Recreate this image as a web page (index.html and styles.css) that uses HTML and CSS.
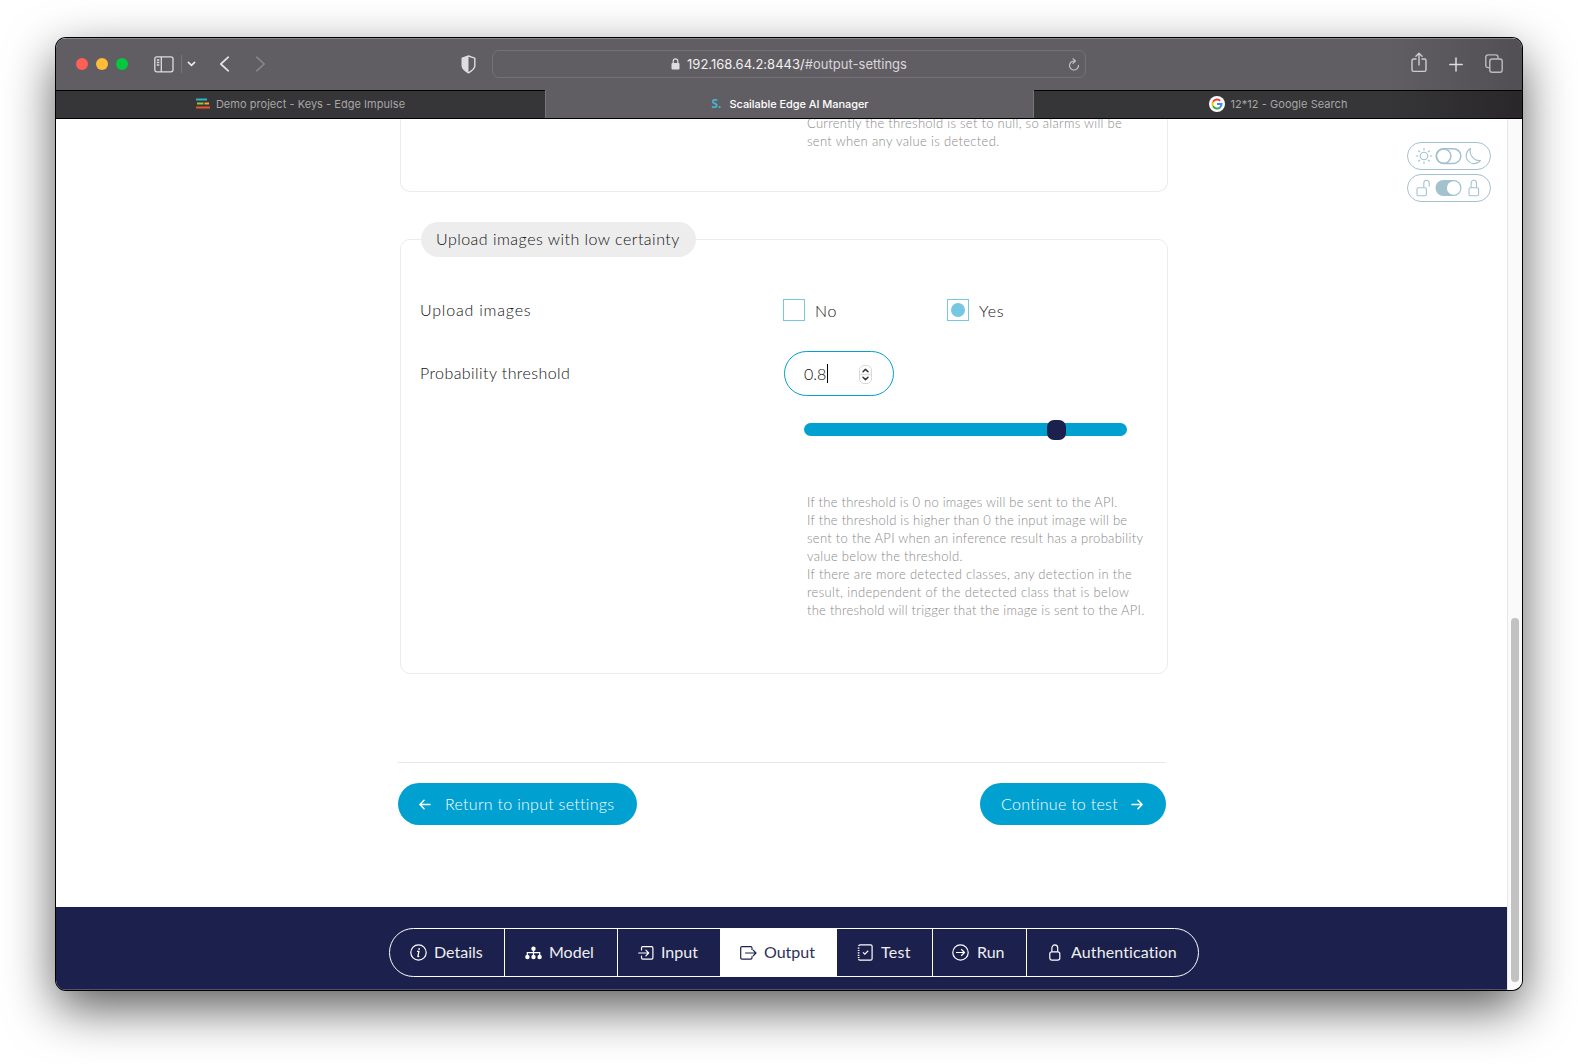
FILE: index.html
```html
<!DOCTYPE html>
<html lang="en">
<head>
<meta charset="utf-8">
<title>Scailable Edge AI Manager</title>
<link rel="stylesheet" href="styles.css">
</head>
<body>
<div class="window">
  <header class="toolbar">
    <div class="lights"><i class="red"></i><i class="yellow"></i><i class="green"></i></div>
    <svg class="sidebar-icon" width="20" height="17" viewBox="0 0 20 17" fill="none" stroke="#dedce1" stroke-width="1.3"><rect x=".8" y=".8" width="18.2" height="15" rx="2"/><path d="M7.3 1v15M2.8 4h2.5M2.8 6.5h2.5M2.8 9h2.5"/></svg>
    <span class="tool-divider"></span>
    <svg class="down-icon" width="9" height="6" viewBox="0 0 9 6" fill="none" stroke="#e9e7ec" stroke-width="1.7" stroke-linecap="round" stroke-linejoin="round"><path d="M1.4 1.3 4.5 4.3 7.6 1.3"/></svg>
    <svg class="back-icon" width="11" height="16" viewBox="0 0 11 16" fill="none" stroke="#e4e2e7" stroke-width="1.7" stroke-linecap="round" stroke-linejoin="round"><path d="M9.3 1.2 1.8 8l7.5 6.8"/></svg>
    <svg class="forward-icon" width="11" height="16" viewBox="0 0 11 16" fill="none" stroke="#89868c" stroke-width="1.6" stroke-linecap="round" stroke-linejoin="round"><path d="M1.7 1.2 9.2 8l-7.5 6.8"/></svg>
    <svg class="shield-icon" width="15" height="19" viewBox="0 0 15 19"><path d="M7.5 1 13.8 3.2v7.6c0 3-2.7 5-6.3 7-3.6-2-6.3-4-6.3-7V3.2z" fill="none" stroke="#dedce1" stroke-width="1.4"/><path d="M7.5 1v16.8c-3.6-2-6.3-4-6.3-7V3.2z" fill="#dedce1"/></svg>
    <div class="address">
      <svg class="lock-icon" width="9" height="12" viewBox="0 0 9 12"><rect x=".5" y="5" width="8" height="6.4" rx="1" fill="#dedce1"/><path d="M2.2 5.5V3.2a2.3 2.3 0 0 1 4.6 0v2.3" fill="none" stroke="#dedce1" stroke-width="1.2"/></svg>
      <span class="url">192.168.64.2:8443/<span class="url-path">#output-settings</span></span>
      <svg class="reload-icon" width="12" height="13" viewBox="0 0 12 13" fill="none" stroke="#c2c0c5" stroke-width="1.2" stroke-linecap="round" stroke-linejoin="round"><path d="M6.2 3A4.5 4.5 0 1 0 10.5 7.4M5 .8 7.4 3 5 5.3"/></svg>
    </div>
    <svg class="share-icon" width="16" height="21" viewBox="0 0 16 21" fill="none" stroke="#cfcdd2" stroke-width="1.4" stroke-linecap="round" stroke-linejoin="round"><path d="M5 7H2.6Q1 7 1 8.6v9.2q0 1.6 1.6 1.6h10.8q1.6 0 1.6-1.6V8.6Q15 7 13.4 7H11M8 13V1.4M4.9 4.2 8 1.2l3.1 3"/></svg>
    <svg class="plus-icon" width="14" height="15" viewBox="0 0 14 15" fill="none" stroke="#dedce1" stroke-width="1.5" stroke-linecap="round"><path d="M7 1v13M.8 7.5h12.4"/></svg>
    <svg class="tabs-icon" width="18" height="19" viewBox="0 0 18 19" fill="none" stroke="#bdbbc0" stroke-width="1.4"><rect x="4.8" y="5" width="12.4" height="13.2" rx="2.2"/><path d="M4.8 13.6H3.2Q.8 13.6.8 11.4V3.2Q.8.9 3.2.9h7.6Q13 .9 13 3.2V5"/></svg>
  </header>

  <nav class="tabs">
    <div class="tab">
      <svg width="14" height="11" viewBox="0 0 14 11" fill="none" stroke-width="2"><path d="M0 1.5h11" stroke="#30b5c8"/><path d="M1 5.5h6.500" stroke="#91c934"/><path d="M8.5 5.500H13" stroke="#f5a82d"/><path d="M0 9.500h14" stroke="#ee5130"/></svg>
      <span class="tab-demo">Demo project - Keys - Edge Impulse</span>
    </div>
    <div class="tab active"><b class="s-logo">S.</b><span class="tab-manager">Scailable Edge AI Manager</span></div>
    <div class="tab">
      <svg width="16" height="16" viewBox="0 0 16 16" fill="none" stroke-width="2"><circle cx="8" cy="8" r="8" fill="#fff"/><path d="M4.05 5.8A4.5 4.5 0 0 1 11.2 4.8" stroke="#ea4335"/><path d="M4.05 10.2A4.5 4.5 0 0 1 4.05 5.8" stroke="#fbbc05"/><path d="M11 11.4A4.5 4.5 0 0 1 4.05 10.2" stroke="#34a853"/><path d="M8 8.1h4.5a4.5 4.5 0 0 1-1.5 3.3" stroke="#4285f4"/></svg>
      <span class="tab-google">12*12 - Google Search</span>
    </div>
  </nav>

  <div class="viewport">
    <div class="page">
      <main class="content">
        <section class="panel panel-top">
          <p class="help"><span class="h1">Currently the threshold is set to null, so alarms will be</span><span class="h2">sent when any value is detected.</span></p>
        </section>

        <section class="panel panel-upload">
          <h2 class="legend">Upload images with low certainty</h2>
          <div class="row row-upload">
            <span class="label">Upload images</span>
            <label class="option"><i class="box"></i><span>No</span></label>
            <label class="option"><i class="box checked"></i><span>Yes</span></label>
          </div>
          <div class="row row-threshold">
            <span class="label label-prob">Probability threshold</span>
            <div class="number">
              <span>0.8</span><i class="caret"></i>
              <svg width="13" height="19" viewBox="0 0 13 19" fill="none"><rect x=".5" y=".5" width="12" height="18" rx="4.5" fill="#fff" stroke="#d9d9d9"/><path d="M1 9.5h11" stroke="#dedede" stroke-width="1.5"/><path d="M4 6.7 6.5 4.4 9 6.7M4 12.3l2.5 2.3L9 12.3" stroke="#333" stroke-width="1.5" stroke-linecap="round" stroke-linejoin="round"/></svg>
            </div>
          </div>
          <div class="slider"><i class="thumb"></i></div>
          <p class="help">
            <span class="t1">If the threshold is 0 no images will be sent to the API.</span>
            <span class="t2">If the threshold is higher than 0 the input image will be</span>
            <span class="t3">sent to the API when an inference result has a probability</span>
            <span class="t4">value below the threshold.</span>
            <span class="t5">If there are more detected classes, any detection in the</span>
            <span class="t6">result, independent of the detected class that is below</span>
            <span class="t7">the threshold will trigger that the image is sent to the API.</span>
          </p>
        </section>

        <div class="actions">
          <button class="btn btn-back"><svg width="12" height="11" viewBox="0 0 12 11" fill="none" stroke="#fff" stroke-width="1.5" stroke-linecap="round" stroke-linejoin="round"><path d="M11 5.5H1M5 1.3.9 5.5 5 9.7"/></svg><span>Return to input settings</span></button>
          <button class="btn btn-next"><span>Continue to test</span><svg width="12" height="11" viewBox="0 0 12 11" fill="none" stroke="#fff" stroke-width="1.5" stroke-linecap="round" stroke-linejoin="round"><path d="M1 5.5h10M7 1.3l4.1 4.2L7 9.7"/></svg></button>
        </div>
      </main>

      <aside class="switches">
        <div class="switch">
          <svg width="84" height="28" viewBox="0 0 84 28" fill="none" stroke="#a3c2cd" stroke-width="1.1"><circle cx="17" cy="14" r="3.7"/><path d="M17 6v2.4M17 19.6V22M9 14h2.4M22.600 14H25M11.3 8.300l1.700 1.700M21 18l1.700 1.700M11.300 19.700 13 18M21 10l1.700-1.700"/><rect x="29.200" y="6.700" width="24.600" height="14.800" rx="7.400" stroke-width="1.500"/><circle cx="36.700" cy="14.100" r="7.200" stroke-width="1.500"/><path d="M63.500 6.500A8 8 0 1 0 73.500 18.500 9.500 9.500 0 0 1 63.500 6.500z" stroke-linejoin="round"/></svg>
        </div>
        <div class="switch">
          <svg width="84" height="28" viewBox="0 0 84 28" fill="none" stroke="#a3c2cd" stroke-width="1.100"><rect x="10" y="13.700" width="9.400" height="8" rx="1.500"/><path d="M16.800 13.500V9.200a2.700 3 0 0 1 5.400 0v3.300"/><rect x="28.500" y="6" width="26" height="16" rx="8" fill="#a3c2cd" stroke="none"/><circle cx="46.600" cy="14" r="6.700" fill="#fff" stroke="none"/><rect x="62" y="13.700" width="9.600" height="8" rx="1.500"/><path d="M64.100 13.500V9.200a2.700 3 0 0 1 5.400 0v4.300"/></svg>
        </div>
      </aside>

      <footer class="footer">
        <nav class="steps">
          <a class="step s-details"><svg width="17" height="17" viewBox="0 0 17 17" fill="none" stroke="currentColor" stroke-width="1.200"><circle cx="8.500" cy="8.500" r="7.700"/><path d="M7 7.300h1.900L7.900 12.400q.3.500 1.300-.1" stroke-width="1.300"/><circle cx="9.100" cy="4.900" r=".9" fill="currentColor" stroke="none"/></svg><span>Details</span></a>
          <a class="step s-model"><svg width="17" height="14" viewBox="0 0 17 14" fill="currentColor"><circle cx="8.500" cy="2.700" r="2.200"/><circle cx="2.400" cy="11" r="2.200"/><circle cx="8.500" cy="11" r="2.200"/><circle cx="14.600" cy="11" r="2.200"/><path d="M8.500 3v7M2.300 10V6.700h12.400V10" fill="none" stroke="currentColor" stroke-width="1.200"/></svg><span>Model</span></a>
          <a class="step s-input"><svg width="16" height="14" viewBox="0 0 16 14" fill="none" stroke="currentColor" stroke-width="1.200" stroke-linecap="round" stroke-linejoin="round"><path d="M3.500 4V2q0-1.300 1.300-1.300H13.600q1.300 0 1.300 1.300v9.800q0 1.300-1.300 1.300H4.800q-1.300 0-1.300-1.300V10M.7 7h9.800M7.900 4.100l2.800 2.900-2.800 2.900"/></svg><span>Input</span></a>
          <a class="step s-output current"><svg width="17" height="14" viewBox="0 0 17 14" fill="none" stroke="currentColor" stroke-width="1.200" stroke-linecap="round" stroke-linejoin="round"><path d="M12 3.500V2Q12 .7 10.700.7H2Q.7.7.7 2v9.800q0 1.300 1.300 1.300h8.700q1.300 0 1.300-1.300V10.500M5.500 7H16M13.200 4.100 16 7l-2.800 2.900"/></svg><span>Output</span></a>
          <a class="step s-test"><svg width="16" height="17" viewBox="0 0 16 17" fill="none" stroke="currentColor" stroke-width="1.200"><path d="M1.600 2.200Q1.800.8 3.200.8h10.400q1.500 0 1.500 1.500v12.400q0 1.500-1.500 1.500H3.200q-1.400 0-1.600-1.400"/><path d="M1.600 3.500v10.500" stroke-width="1.700" stroke-dasharray="1.200 1.200"/><path d="m6 8.400 1.800 1.700 3.400-3.300"/></svg><span>Test</span></a>
          <a class="step s-run"><svg width="17" height="17" viewBox="0 0 17 17" fill="none" stroke="currentColor" stroke-width="1.200" stroke-linejoin="round"><circle cx="8.500" cy="8.500" r="7.700"/><path d="M4 8.500h8.500M9.200 5.300l3.300 3.200-3.300 3.200"/></svg><span>Run</span></a>
          <a class="step s-auth"><svg width="12" height="17" viewBox="0 0 12 17" fill="none" stroke="currentColor" stroke-width="1.200"><rect x=".8" y="7.800" width="10" height="8.300" rx="2"/><path d="M2.900 7.700V4a2.900 3.100 0 0 1 5.800 0v3.700"/></svg><span>Authentication</span></a>
        </nav>
      </footer>
    </div>
    <div class="scrollbar"><i></i></div>
  </div>
</div>
</body>
</html>
```

FILE: styles.css
```css
* { box-sizing: border-box; }
body { margin: 0; height: 1064px; overflow: hidden; background: #fff; font-family: Lato, sans-serif; font-weight: 300; color: #111; }
svg { display: block; flex: none; }
i { display: block; font-style: normal; }

.window { width: 1466px; height: 952px; margin: 38px 0 0 56px; border-radius: 10px; background: #fff; overflow: hidden; display: flex; flex-direction: column; box-shadow: 0 0 0 1px #000, 0 18px 50px rgba(0,0,0,.65); }

/* browser chrome */
.toolbar { height: 52px; flex: none; display: flex; align-items: center; background: linear-gradient(90deg, #615e63 0 91%, #514e54); border-top: 1px solid #87858a; padding: 0 0 1px 20px; }
.lights { display: flex; gap: 8px; }
.lights i { width: 12px; height: 12px; border-radius: 50%; }
.red { background: #ff5f57; }
.yellow { background: #febc38; }
.green { background: #06c840; }
.sidebar-icon { margin-left: 26px; }
.tool-divider { width: 1px; height: 18px; background: #77757a; margin-left: 7px; }
.down-icon { margin-left: 5px; }
.back-icon { margin-left: 23px; }
.forward-icon { margin-left: 25px; }
.shield-icon { margin-left: 195px; }
.address { width: 594px; height: 28px; margin-left: 16px; border: 1px solid #757277; border-radius: 7px; display: flex; align-items: center; padding-left: 178px; }
.url { margin-left: 7px; width: 221px; font: 400 13px Inter, sans-serif; color: #f1f0f2; white-space: nowrap; letter-spacing: .02px; }
.url-path { color: #d9d7db; }
.reload-icon { margin-left: 160px; }
.share-icon { margin-left: 325px; margin-top: -3px; }
.plus-icon { margin-left: 22px; }
.tabs-icon { margin-left: 22px; margin-top: -1px; }

.tabs { height: 29px; flex: none; display: grid; grid-template-columns: 489px 489px 488px; background: linear-gradient(90deg, #363537 0 91%, #29272a); border-bottom: 1px solid #000; }
.tab { display: flex; align-items: center; justify-content: center; border-top: 1px solid #000; padding-bottom: 2px; font: 400 11px Inter, sans-serif; color: #a7a6a8; white-space: nowrap; gap: 6px; }
.tab.active { background: #615e63; border-top: 0; border-left: 1px solid #77757a; border-right: 1px solid #77757a; color: #fff; font-weight: 500; gap: 8px; padding: 0 0 1px 1px; }
.s-logo { color: #45b3d0; font: 700 12px "Open Sans", sans-serif; }
.tab-demo { letter-spacing: .04px; }
.tab-manager { letter-spacing: -.06px; }
.tab-google { letter-spacing: .05px; }

.viewport { flex: 1; min-height: 0; display: flex; }
.page { width: 1451px; flex: none; display: grid; grid-template-columns: 342px 770px 1fr; grid-template-rows: 788px 83px; }
.scrollbar { flex: 1; background: #fafafa; border-left: 1px solid #e8e8e8; padding: 499px 0 0 3px; }
.scrollbar i { width: 8px; height: 364px; border-radius: 4px; background: #c2c2c2; }

/* settings */
.content { grid-column: 2; min-width: 0; overflow: hidden; }
.panel { width: 768px; margin-left: 2px; border: 1px solid #ebebeb; border-radius: 10px; }
.panel-top { display: flow-root; height: 73px; border-top: 0; border-radius: 0 0 10px 10px; }
.help { margin: 0 0 0 406px; font-size: 13px; line-height: 18px; color: #8a8a8a; }
.help span { display: block; white-space: nowrap; }
.h1 { letter-spacing: .28px; }
.h2 { letter-spacing: .33px; }
.t1 { letter-spacing: .23px; }
.t2 { letter-spacing: .26px; }
.t3 { letter-spacing: .29px; }
.t4 { letter-spacing: .31px; }
.t5 { letter-spacing: .33px; }
.t6 { letter-spacing: .35px; }
.t7 { letter-spacing: .25px; }
.panel-top .help { margin-top: -5px; }
.panel-upload { height: 435px; margin-top: 47px; }
.legend { width: 275px; height: 35px; margin: -18px 0 0 20px; padding-left: 15px; border-radius: 18px; background: #ededed; font-size: 16px; font-weight: 300; line-height: 34px; white-space: nowrap; letter-spacing: .48px; }
.row { display: flex; align-items: center; padding-left: 19px; font-size: 16px; }
.row-upload { height: 22px; margin-top: 42px; }
.label { width: 363px; padding-bottom: 2px; letter-spacing: .8px; }
.label-prob { width: 364px; letter-spacing: .42px; }
.option { width: 164px; display: flex; align-items: center; gap: 10px; letter-spacing: .8px; }
.box { width: 22px; height: 22px; border: 1px solid #75c7e2; padding: 3px; }
.checked::after { content: ""; display: block; width: 14px; height: 14px; border-radius: 50%; background: #75c7e2; }
.row-threshold { height: 45px; margin-top: 30px; }
.number { width: 110px; height: 45px; border: 1px solid #00a0d0; border-radius: 23px; display: flex; align-items: center; padding-left: 19px; }
.number span { width: 22px; font-size: 16px; white-space: nowrap; }
.caret { width: 1px; height: 19px; background: #000; margin-left: 1px; }
.number svg { margin-left: 31px; margin-top: 2px; }
.slider { width: 323px; height: 13px; margin: 27px 0 0 403px; border-radius: 7px; background: #00a0d0; }
.thumb { width: 19px; height: 20px; border-radius: 7px; background: #1b214c; position: relative; left: 243px; top: -3px; }
.panel-upload .help { margin-top: 57px; }

.actions { height: 64px; margin-top: 88px; width: 768px; border-top: 1px solid #e8e8e8; padding-top: 20px; display: flex; justify-content: space-between; }
.btn { height: 42px; border: 0; border-radius: 21px; background: #00a0d0; color: #fff; display: flex; align-items: center; font: 300 16px Lato, sans-serif; padding: 0 0 0 21px; white-space: nowrap; }
.btn span { padding-bottom: 2px; }
.btn-back { width: 239px; gap: 14px; letter-spacing: .28px; }
.btn-next { width: 186px; gap: 14px; letter-spacing: .28px; }
.btn-next span { width: 116px; }

.switches { grid-column: 3; padding: 23px 0 0 239px; display: flex; flex-direction: column; gap: 4px; }
.switch { width: 84px; height: 28px; border: 1px solid #a3c2cd; border-radius: 14px; }
.switch svg { margin: -1px; }

/* step navigation */
.footer { grid-column: 1 / -1; background: #1b214c; padding: 21px 0 0 333px; border-bottom: 1px solid #50546e; }
.steps { width: 810px; height: 49px; display: flex; border: 1px solid #fff; border-radius: 25px; overflow: hidden; color: #fff; font-weight: 400; font-size: 16px; }
.step { display: flex; align-items: center; border-right: 1px solid #fff; padding-left: 20px; white-space: nowrap; gap: 7px; }
.step span { padding-bottom: 2px; opacity: .93; }
.step:last-child { border-right: 0; }
.s-details { width: 115px; }
.s-model { width: 113px; }
.s-input { width: 103px; }
.s-output { width: 116px; padding-left: 19px; }
.s-test { width: 96px; gap: 8px; letter-spacing: .3px; }
.s-run { width: 94px; padding-left: 19px; gap: 8px; }
.s-auth { flex: 1; padding-left: 22px; gap: 10px; letter-spacing: .12px; }
.current { background: #fff; color: #1b214c; }
```
